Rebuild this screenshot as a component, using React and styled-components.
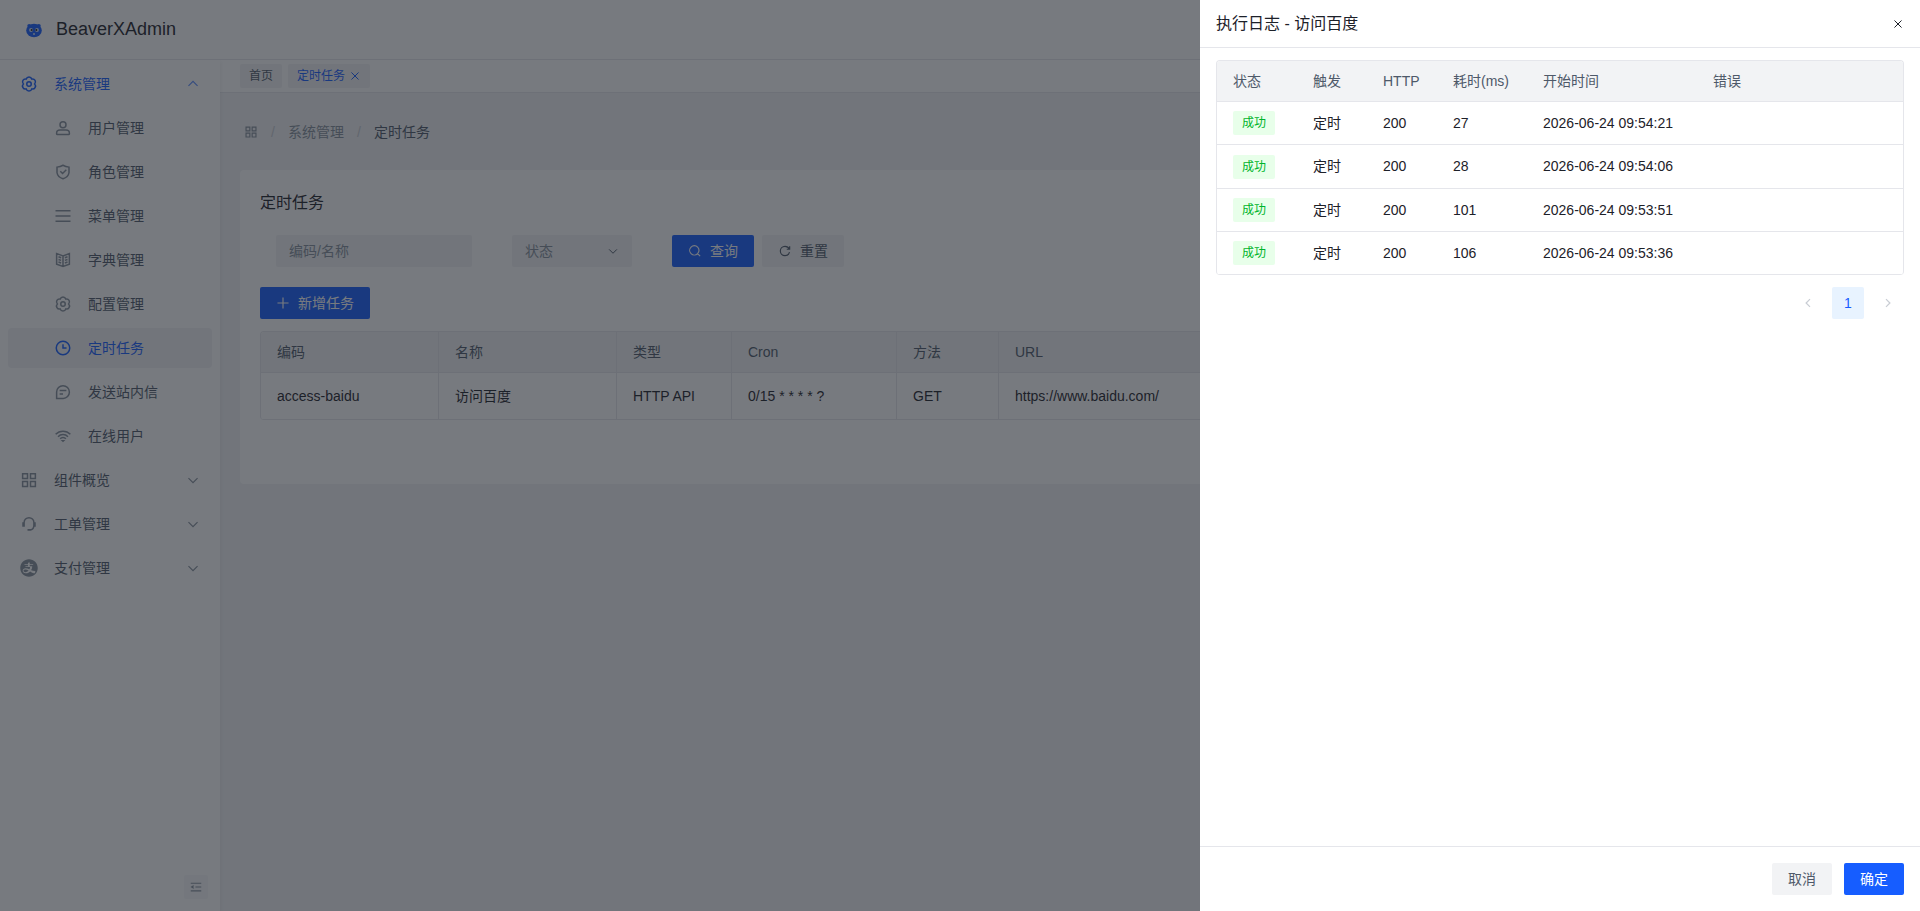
import React from 'react';
import styled, { createGlobalStyle, css } from 'styled-components';
import { AiFillAlipayCircle } from 'react-icons/ai';

const GlobalStyle = createGlobalStyle`
  * {
    box-sizing: border-box;
  }

  body {
    margin: 0;
    color: #1d2129;
    font-family: 'Liberation Sans', 'Noto Sans CJK SC', sans-serif;
    font-size: 14px;
    line-height: 22px;
  }

  button, input, select {
    font: inherit;
    margin: 0;
  }
`;

const iconPaths = {
  settings: 'M16.5 11a7.8 7.8 0 0 1 15 0 7.8 7.8 0 0 1 7.5 13 7.8 7.8 0 0 1-7.5 13 7.8 7.8 0 0 1-15 0A7.8 7.8 0 0 1 9 24a7.8 7.8 0 0 1 7.5-13ZM30 24a6 6 0 1 1-12 0 6 6 0 0 1 12 0Z',
  user: 'M7 37c0-4.97 4.03-8 9-8h16c4.97 0 9 3.03 9 8v3a1 1 0 0 1-1 1H8a1 1 0 0 1-1-1v-3ZM32 15a8 8 0 1 1-16 0 8 8 0 0 1 16 0Z',
  safe: 'm16.825 22.165 6 6 10-10M24 6c7 4 16 5 16 5v15s-2 12-16 16.027C10 38 8 26 8 26V11s9-1 16-5Z',
  menu: 'M44 10H4M44 24H4M44 38H4',
  book: 'M24 13 7 7v28l17 6 17-6V7l-17 6Zm0 0v27.5M29 18l7-2.5M29 25l7-2.5M29 32l7-2.5M19 18l-7-2.5m7 9.5-7-2.5m7 9.5-7-2.5',
  clock: 'M24 14v10h9.5m8.5 0c0 9.941-8.059 18-18 18S6 33.941 6 24 14.059 6 24 6s18 8.059 18 18Z',
  message: 'M15 20h18m-18 9h9M7 41h17.63C33.67 41 41 33.67 41 24.63V24c0-9.389-7.611-17-17-17S7 14.611 7 24v17Z',
  wifi: 'M31.587 31.485A9.978 9.978 0 0 0 24 28a9.977 9.977 0 0 0-7.586 3.485M37.255 25.822A17.953 17.953 0 0 0 24 20a17.953 17.953 0 0 0-13.256 5.822M43.618 19.449C38.696 14.246 31.728 11 24 11c-7.727 0-14.696 3.246-19.617 8.449M25.5 36.5 24 38l-1.5-1.5h3Z',
  apps: 'M7 7h13v13H7zM28 7h13v13H28zM7 28h13v13H7zM28 28h13v13H28z',
  service: 'M11 31V20c0-7.18 5.82-13 13-13s13 5.82 13 13v8c0 5.784-3.778 10.686-9 12.373M8 21h1v8H8zM39 21h1v8h-1zM22 39h5v1h-5z',
  up: 'M39.6 30.557 24.043 15 8.487 30.557',
  down: 'M39.6 17.443 24.043 33 8.487 17.443',
  left: 'M32 8.4 16.444 23.956 32 39.513',
  right: 'm16 39.513 15.556-15.557L16 8.4',
  close: 'M9.857 9.858 24 24m0 0 14.142 14.142M24 24 38.142 9.858M24 24 9.857 38.142',
  search: 'M33.072 33.071c6.248-6.248 6.248-16.379 0-22.627-6.249-6.249-16.38-6.249-22.628 0-6.248 6.248-6.248 16.379 0 22.627 6.248 6.248 16.38 6.248 22.628 0Zm0 0 8.485 8.485',
  refresh: 'M38.837 18C36.463 12.136 30.715 8 24 8 15.163 8 8 15.163 8 24s7.163 16 16 16c7.455 0 13.72-5.1 15.496-12M40 8v10H30',
  plus: 'M5 24h38M24 5v38',
  fold: 'M42 11H6M42 24H22M42 37H6M13.66 26.912l-4.82-3.118 4.82-3.118v6.236Z',
};

const Svg = styled.svg`
  flex: none;
  display: block;
  fill: none;
  stroke: currentColor;
  stroke-width: ${(props) => props.$stroke};
`;

function Icon({ name, size = 14, stroke = 4 }) {
  return (
    <Svg viewBox="0 0 48 48" width={size} height={size} $stroke={stroke} aria-hidden="true">
      <path d={iconPaths[name]} />
    </Svg>
  );
}

const Page = styled.div`
  display: flex;
  flex-direction: column;
  height: 100vh;
  overflow: hidden;
  background: #f2f3f5;
`;

const Header = styled.header`
  display: flex;
  align-items: center;
  flex: none;
  gap: 10px;
  height: 60px;
  padding: 0 24px;
  padding-bottom: 2px;
  background: #fff;
  border-bottom: 1px solid #e5e6eb;
`;

const Brand = styled.span`
  font-size: 18px;
  line-height: 28px;
`;

const Body = styled.div`
  display: flex;
  flex: 1;
  min-height: 0;
`;

const Sider = styled.aside`
  display: flex;
  flex-direction: column;
  justify-content: space-between;
  flex: none;
  z-index: 1;
  width: 220px;
  background: #fff;
  box-shadow: 0 2px 5px rgba(0, 0, 0, 0.08);
  clip-path: inset(0 -8px 0 0);
`;

const Menu = styled.nav`
  display: flex;
  flex-direction: column;
  gap: 4px;
  padding: 4px 8px;
`;

const MenuIcon = styled.span`
  display: flex;
  justify-content: center;
  width: 18px;
  color: #86909c;

  > svg {
    flex: none;
  }
`;

const MenuLabel = styled.span`
  flex: 1;
`;

const MenuArrow = styled.span`
  color: ${(props) => (props.$open ? '#5c8dff' : '#86909c')};
`;

const MenuItem = styled.a`
  display: flex;
  align-items: center;
  gap: 16px;
  height: 40px;
  padding: 0 12px;
  padding-left: ${(props) => (props.$sub ? 46 : 12)}px;
  border-radius: 4px;
  color: #4e5969;
  text-decoration: none;

  ${(props) => props.$selected && css`
    background: #f2f3f5;
  `}

  ${(props) => props.$active && css`
    color: #165dff;

    ${MenuIcon} {
      color: inherit;
    }
  `}
`;

const Collapse = styled.button`
  display: flex;
  align-items: center;
  justify-content: center;
  align-self: flex-end;
  width: 24px;
  height: 24px;
  margin: 12px;
  padding: 0;
  border: none;
  border-radius: 2px;
  background: #f7f8fa;
  color: #86909c;
`;

const Main = styled.main`
  flex: 1;
  min-width: 0;
`;

const TabBar = styled.div`
  display: flex;
  align-items: center;
  gap: 6px;
  height: 33px;
  padding: 0 20px;
  background: #fff;
  border-bottom: 1px solid #e5e6eb;
`;

const Tab = styled.a`
  display: flex;
  align-items: center;
  gap: 4px;
  height: 24px;
  padding: 0 9px;
  border-radius: 2px;
  background: #f2f3f5;
  color: ${(props) => (props.$active ? '#165dff' : '#4e5969')};
  font-size: 12px;
  text-decoration: none;
`;

const Content = styled.div`
  padding: 0 20px;
`;

const Breadcrumb = styled.nav`
  display: flex;
  align-items: center;
  gap: 4px;
  height: 77px;
  color: #86909c;
`;

const Crumb = styled.a`
  padding: 0 4px;
  color: ${(props) => (props.$current ? '#4e5969' : '#86909c')};
  text-decoration: none;
`;

const Slash = styled.span`
  width: 14px;
  color: #c9cdd4;
  text-align: center;
`;

const Card = styled.section`
  display: flex;
  flex-direction: column;
  padding: 20px;
  border-radius: 4px;
  background: #fff;
`;

const CardTitle = styled.h1`
  margin: 0 0 20px;
  font-size: 16px;
  font-weight: 400;
  line-height: 25px;
`;

const SearchForm = styled.form`
  display: flex;
  gap: 40px;
  padding-left: 16px;
  margin-bottom: 20px;
`;

const TextInput = styled.input`
  width: 196px;
  height: 32px;
  padding: 0 13px;
  border: none;
  border-radius: 2px;
  background: #f2f3f5;

  &::placeholder {
    color: #86909c;
  }
`;

const SelectBox = styled.label`
  display: grid;
  align-items: center;
  width: 120px;
  height: 32px;
  border-radius: 2px;
  background: #f2f3f5;
  color: #4e5969;

  > * {
    grid-area: 1 / 1;
  }

  > svg {
    justify-self: end;
    margin-right: 13px;
    pointer-events: none;
  }
`;

const Select = styled.select`
  width: 100%;
  height: 32px;
  padding: 0 13px;
  appearance: none;
  border: none;
  background: transparent;
  color: #86909c;
`;

const ButtonGroup = styled.div`
  display: flex;
  gap: 8px;
`;

const Button = styled.button`
  display: flex;
  align-items: center;
  align-self: flex-start;
  gap: 8px;
  height: 32px;
  padding: 0 16px;
  border: none;
  border-radius: 2px;
  background: ${(props) => (props.$primary ? '#165dff' : '#f2f3f5')};
  color: ${(props) => (props.$primary ? '#fff' : '#4e5969')};
  white-space: nowrap;
`;

const Table = styled.table`
  width: 100%;
  table-layout: fixed;
  margin-top: ${(props) => (props.$bordered ? 12 : 0)}px;
  border: 1px solid #e5e6eb;
  border-bottom: none;
  border-radius: 4px;
  border-spacing: 0;
  overflow: hidden;

  th, td {
    padding: 9px 16px;
    border-bottom: 1px solid #e5e6eb;
    border-right: ${(props) => (props.$bordered ? '1px solid #e5e6eb' : 'none')};
    text-align: left;
    font-weight: 400;
    white-space: nowrap;
  }

  td {
    padding-top: ${(props) => (props.$bordered ? 12 : 9)}px;
    padding-bottom: ${(props) => (props.$bordered ? 12 : 9)}px;
  }

  th:last-child, td:last-child {
    border-right: none;
  }

  th {
    background: #f2f3f5;
    color: #4e5969;
  }
`;

const Tag = styled.span`
  display: inline-flex;
  align-items: center;
  height: 24px;
  padding: 0 9px;
  border-radius: 2px;
  background: #e8ffea;
  color: #00b42a;
  font-size: 12px;
  vertical-align: middle;
`;

const Pager = styled.nav`
  display: flex;
  justify-content: flex-end;
  gap: 8px;
  margin-top: 12px;
`;

const PageButton = styled.button`
  display: flex;
  align-items: center;
  justify-content: center;
  width: 32px;
  height: 32px;
  padding: 0;
  border: none;
  border-radius: 2px;
  background: ${(props) => (props.$active ? '#e8f3ff' : 'transparent')};
  color: ${(props) => (props.$active ? '#165dff' : '#c9cdd4')};
`;

const Mask = styled.div`
  position: fixed;
  inset: 0;
  z-index: 10;
  display: flex;
  justify-content: flex-end;
  background: rgba(29, 33, 41, 0.6);
`;

const Drawer = styled.div`
  display: flex;
  flex-direction: column;
  width: 720px;
  max-width: 100%;
  background: #fff;
`;

const DrawerHeader = styled.div`
  display: flex;
  align-items: center;
  justify-content: space-between;
  height: 48px;
  padding: 0 16px;
  border-bottom: 1px solid #e5e6eb;
`;

const DrawerTitle = styled.h2`
  margin: 0;
  font-size: 16px;
  font-weight: 400;
  line-height: 24px;
`;

const CloseButton = styled.button`
  padding: 0;
  border: none;
  background: none;
  color: #1d2129;
`;

const DrawerBody = styled.div`
  flex: 1;
  padding: 12px 16px;
  overflow: auto;
`;

const DrawerFooter = styled.div`
  display: flex;
  justify-content: flex-end;
  gap: 12px;
  padding: 16px;
  border-top: 1px solid #e5e6eb;
`;

const systemMenu = [
  { icon: 'user', label: '用户管理' },
  { icon: 'safe', label: '角色管理' },
  { icon: 'menu', label: '菜单管理' },
  { icon: 'book', label: '字典管理' },
  { icon: 'settings', label: '配置管理' },
  { icon: 'clock', label: '定时任务', selected: true },
  { icon: 'message', label: '发送站内信' },
  { icon: 'wifi', label: '在线用户' },
];

const logs = [
  { cost: 27, startedAt: '2026-06-24 09:54:21' },
  { cost: 28, startedAt: '2026-06-24 09:54:06' },
  { cost: 101, startedAt: '2026-06-24 09:53:51' },
  { cost: 106, startedAt: '2026-06-24 09:53:36' },
];

function Logo() {
  return (
    <svg width="22" height="22" viewBox="0 0 22 22" aria-hidden="true">
      <circle cx="5.2" cy="7.8" r="1.9" fill="#165dff" />
      <circle cx="14.8" cy="7.8" r="1.9" fill="#165dff" />
      <ellipse cx="10" cy="12.5" rx="7.8" ry="6.8" fill="#165dff" />
      <circle cx="7" cy="12" r="1.9" fill="#d5e2f5" />
      <circle cx="13" cy="12" r="1.9" fill="#d5e2f5" />
      <circle cx="7.6" cy="12" r="1" fill="#1d2129" />
      <circle cx="12.4" cy="12" r="1" fill="#1d2129" />
      <path d="M9 15.2h2v1.5H9z" fill="#d5e2f5" />
    </svg>
  );
}

function Pagination() {
  return (
    <Pager aria-label="分页">
      <PageButton aria-label="上一页"><Icon name="left" size={12} stroke={5} /></PageButton>
      <PageButton $active>1</PageButton>
      <PageButton aria-label="下一页"><Icon name="right" size={12} stroke={5} /></PageButton>
    </Pager>
  );
}

function SideMenu() {
  return (
    <Sider>
      <Menu>
        <MenuItem href="#" $active>
          <MenuIcon><Icon name="settings" size={18} /></MenuIcon>
          <MenuLabel>系统管理</MenuLabel>
          <MenuArrow $open><Icon name="up" /></MenuArrow>
        </MenuItem>
        {systemMenu.map((item) => (
          <MenuItem key={item.label} href="#" $sub $active={item.selected} $selected={item.selected}>
            <MenuIcon><Icon name={item.icon} size={18} /></MenuIcon>
            <MenuLabel>{item.label}</MenuLabel>
          </MenuItem>
        ))}
        <MenuItem href="#">
          <MenuIcon><Icon name="apps" size={18} /></MenuIcon>
          <MenuLabel>组件概览</MenuLabel>
          <MenuArrow><Icon name="down" /></MenuArrow>
        </MenuItem>
        <MenuItem href="#">
          <MenuIcon><Icon name="service" size={18} /></MenuIcon>
          <MenuLabel>工单管理</MenuLabel>
          <MenuArrow><Icon name="down" /></MenuArrow>
        </MenuItem>
        <MenuItem href="#">
          <MenuIcon><AiFillAlipayCircle size={20} /></MenuIcon>
          <MenuLabel>支付管理</MenuLabel>
          <MenuArrow><Icon name="down" /></MenuArrow>
        </MenuItem>
      </Menu>
      <Collapse aria-label="收起菜单"><Icon name="fold" /></Collapse>
    </Sider>
  );
}

function TaskCard() {
  return (
    <Card>
      <CardTitle>定时任务</CardTitle>
      <SearchForm>
        <TextInput placeholder="编码/名称" aria-label="编码/名称" />
        <SelectBox>
          <Select aria-label="状态" defaultValue="">
            <option value="">状态</option>
          </Select>
          <Icon name="down" size={12} />
        </SelectBox>
        <ButtonGroup>
          <Button type="button" $primary><Icon name="search" />查询</Button>
          <Button type="reset"><Icon name="refresh" />重置</Button>
        </ButtonGroup>
      </SearchForm>
      <Button $primary><Icon name="plus" />新增任务</Button>
      <Table $bordered>
        <colgroup>
          <col width="178" />
          <col width="178" />
          <col width="115" />
          <col width="165" />
          <col width="102" />
          <col />
        </colgroup>
        <thead>
          <tr>
            <th>编码</th>
            <th>名称</th>
            <th>类型</th>
            <th>Cron</th>
            <th>方法</th>
            <th>URL</th>
          </tr>
        </thead>
        <tbody>
          <tr>
            <td>access-baidu</td>
            <td>访问百度</td>
            <td>HTTP API</td>
            <td>0/15 * * * * ?</td>
            <td>GET</td>
            <td>https://www.baidu.com/</td>
          </tr>
        </tbody>
      </Table>
      <Pagination />
    </Card>
  );
}

function LogDrawer() {
  return (
    <Mask>
      <Drawer role="dialog" aria-labelledby="log-title">
        <DrawerHeader>
          <DrawerTitle id="log-title">执行日志 - 访问百度</DrawerTitle>
          <CloseButton aria-label="关闭"><Icon name="close" size={12} /></CloseButton>
        </DrawerHeader>
        <DrawerBody>
          <Table>
            <colgroup>
              <col width="80" />
              <col width="70" />
              <col width="70" />
              <col width="90" />
              <col width="170" />
              <col />
            </colgroup>
            <thead>
              <tr>
                <th>状态</th>
                <th>触发</th>
                <th>HTTP</th>
                <th>耗时(ms)</th>
                <th>开始时间</th>
                <th>错误</th>
              </tr>
            </thead>
            <tbody>
              {logs.map((log) => (
                <tr key={log.startedAt}>
                  <td><Tag>成功</Tag></td>
                  <td>定时</td>
                  <td>200</td>
                  <td>{log.cost}</td>
                  <td>{log.startedAt}</td>
                  <td />
                </tr>
              ))}
            </tbody>
          </Table>
          <Pagination />
        </DrawerBody>
        <DrawerFooter>
          <Button>取消</Button>
          <Button $primary>确定</Button>
        </DrawerFooter>
      </Drawer>
    </Mask>
  );
}

function App() {
  return (
    <>
      <GlobalStyle />
      <Page>
        <Header>
          <Logo />
          <Brand>BeaverXAdmin</Brand>
        </Header>
        <Body>
          <SideMenu />
          <Main>
            <TabBar>
              <Tab href="#">首页</Tab>
              <Tab href="#" $active>定时任务<Icon name="close" size={12} /></Tab>
            </TabBar>
            <Content>
              <Breadcrumb>
                <Crumb href="#" aria-label="首页"><Icon name="apps" /></Crumb>
                <Slash>/</Slash>
                <Crumb href="#">系统管理</Crumb>
                <Slash>/</Slash>
                <Crumb href="#" $current>定时任务</Crumb>
              </Breadcrumb>
              <TaskCard />
            </Content>
          </Main>
        </Body>
      </Page>
      <LogDrawer />
    </>
  );
}

export default App;
